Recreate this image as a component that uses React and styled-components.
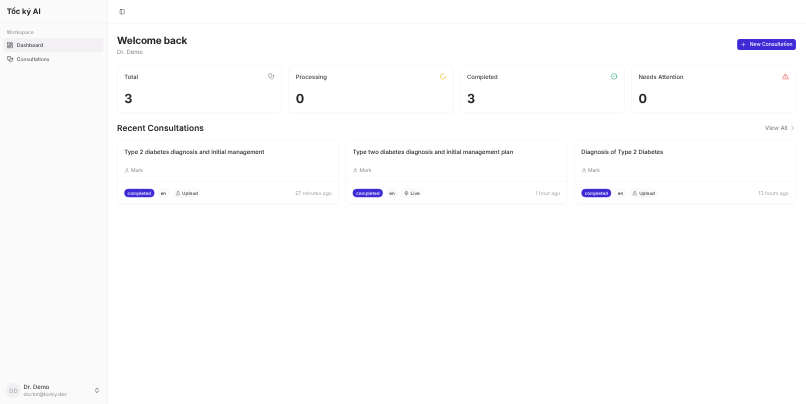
import React from "react";
import styled, { createGlobalStyle } from "styled-components";
import { PanelLeft, LayoutDashboard, Stethoscope, ChevronsUpDown, Plus, LoaderCircle, CircleCheck, TriangleAlert, ChevronRight, User, Upload, Mic } from "lucide-react";

const Global = createGlobalStyle`
  html, body { margin: 0; padding: 0; background: #fff; overflow: hidden; }
  * { box-sizing: border-box; }
  body { font-family: Inter, "Liberation Sans", sans-serif; color: #18181b; text-rendering: geometricPrecision; }
`;

const Frame = styled.div`
  width: 806px;
  height: 404px;
  overflow: hidden;
`;
const Shell = styled.div`
  transform: scale(0.4198);
  transform-origin: 0 0;
  filter: blur(0.5px);
  width: 1920px;
  height: 962px;
  display: flex;
  background: #fff;
`;
const Sidebar = styled.aside`
  width: 256px;
  flex: none;
  display: flex;
  flex-direction: column;
  background: #fafafa;
  border-right: 1px solid #ececee;
`;
const Brand = styled.div`
  height: 56px;
  flex: none;
  display: flex;
  align-items: center;
  padding: 0 16px;
  font-size: 18px;
  font-weight: 700;
  color: #27272a;
  border-bottom: 1px solid #f0f0f2;
`;
const Nav = styled.nav`
  flex: 1;
  padding: 4px 8px 8px;
  display: flex;
  flex-direction: column;
`;
const GroupLabel = styled.div`
  height: 31px;
  display: flex;
  align-items: center;
  padding: 0 8px;
  font-size: 12px;
  font-weight: 400;
  color: #8a8a93;
`;
const NavItem = styled.div`
  height: 33px;
  padding: 0 8px;
  display: flex;
  align-items: center;
  gap: 8px;
  font-size: 12px;
  font-weight: ${(p) => (p.$active ? 500 : 400)};
  color: #3f3f46;
  border-radius: 8px;
  background: ${(p) => (p.$active ? "#f2f0f3" : "transparent")};
`;
const UserRow = styled.div`
  height: 64px;
  flex: none;
  margin: 0 8px;
  padding: 0 8px 0 8px;
  display: flex;
  align-items: center;
  gap: 6px;
`;
const Avatar = styled.div`
  width: 36px;
  height: 36px;
  margin-left: -2px;
  border-radius: 50%;
  background: #f2f0f3;
  color: #a1a1aa;
  font-size: 14px;
  display: flex;
  align-items: center;
  justify-content: center;
  flex: none;
`;
const UserText = styled.div`
  flex: 1;
  padding-top: 2px;
  line-height: 17px;
  font-size: 14px;
  font-weight: 500;
  color: #3f3f46;
  span { display: block; font-size: 12px; font-weight: 400; color: #8a8a93; }
`;
const Main = styled.main`
  flex: 1;
  min-width: 0;
  display: flex;
  flex-direction: column;
`;
const TopBar = styled.header`
  height: 56px;
  flex: none;
  display: flex;
  align-items: center;
  padding: 0 28px;
  color: #52525b;
  border-bottom: 1px solid #f0f0f2;
`;
const Content = styled.div`
  padding: 24px 24px 24px 23px;
  display: flex;
  flex-direction: column;
`;
const Heading = styled.div`
  display: flex;
  align-items: center;
  justify-content: space-between;
  height: 54px;
  margin-bottom: 21px;
`;
const Title = styled.h1`
  margin: 0;
  font-size: 24px;
  line-height: 32px;
  font-weight: 700;
  letter-spacing: -0.5px;
  color: #27272a;
`;
const Sub = styled.div`
  padding-top: 2px;
  font-size: 14px;
  line-height: 20px;
  color: #8a8a93;
`;
const PrimaryButton = styled.button`
  height: 26px;
  width: 140px;
  margin-bottom: 3px;
  border: 0;
  border-radius: 6px;
  background: #3f2bd6;
  color: #f1efff;
  font: 500 12px Inter, sans-serif;
  display: flex;
  align-items: center;
  justify-content: center;
  gap: 8px;
`;
const Stats = styled.section`
  display: grid;
  grid-template-columns: repeat(4, 1fr);
  gap: 16px;
`;
const Card = styled.div`
  background: #fff;
  border: 1px solid #f2f2f4;
  border-radius: 12px;
  box-shadow: 0 1px 2px rgba(0, 0, 0, 0.02);
`;
const StatCard = styled(Card)`
  height: 114px;
  padding: 16px;
`;
const StatHead = styled.div`
  display: flex;
  align-items: center;
  justify-content: space-between;
  height: 20px;
  font-size: 14px;
  font-weight: 500;
  color: #3f3f46;
  svg { color: ${(p) => p.$tone}; }
`;
const StatValue = styled.div`
  margin-top: 25px;
  font-size: 30px;
  line-height: 36px;
  font-weight: 700;
  color: #27272a;
`;
const SectionHead = styled.div`
  display: flex;
  align-items: center;
  justify-content: space-between;
  height: 28px;
  margin: 22px 0 14px;
`;
const SectionTitle = styled.h2`
  margin: 0;
  font-size: 20px;
  font-weight: 600;
  color: #27272a;
`;
const ViewAll = styled.div`
  display: flex;
  align-items: center;
  gap: 4px;
  font-size: 14px;
  font-weight: 500;
  color: #8a8a93;
`;
const Consultations = styled.section`
  display: grid;
  grid-template-columns: repeat(3, 1fr);
  gap: 16px;
`;
const ConsultCard = styled(Card)`
  height: 152px;
  display: flex;
  flex-direction: column;
`;
const ConsultBody = styled.div`
  flex: 1;
  padding: 17px 16px;
`;
const ConsultTitle = styled.div`
  font-size: 14px;
  line-height: 24px;
  font-weight: 500;
  color: #27272a;
`;
const Patient = styled.div`
  margin-top: 22px;
  display: flex;
  align-items: center;
  gap: 4px;
  font-size: 12px;
  line-height: 18px;
  color: #8a8a93;
`;
const ConsultFoot = styled.div`
  height: 54px;
  flex: none;
  padding: 0 16px;
  display: flex;
  align-items: center;
  gap: 8px;
  border-top: 1px solid #f2f2f4;
`;
const Badge = styled.span`
  height: 20px;
  padding: 0 ${(p) => (p.$solid ? 7 : 6)}px;
  display: inline-flex;
  align-items: center;
  gap: 4px;
  border-radius: 999px;
  font-size: 11px;
  font-weight: 500;
  color: ${(p) => (p.$solid ? "#e8e5ff" : "#3f3f46")};
  background: ${(p) => (p.$solid ? "#3f2bd6" : "#fcfcfc")};
  border: 1px solid ${(p) => (p.$solid ? "#3f2bd6" : "#ececee")};
`;
const Time = styled.span`
  margin-left: auto;
  font-size: 12px;
  color: #a1a1aa;
`;

const stats = [
  { label: "Total", value: 3, Icon: Stethoscope, tone: "#8a8a93" },
  { label: "Processing", value: 0, Icon: LoaderCircle, tone: "#eab308" },
  { label: "Completed", value: 3, Icon: CircleCheck, tone: "#22a06b" },
  { label: "Needs Attention", value: 0, Icon: TriangleAlert, tone: "#ef4444" },
];
const consultations = [
  { title: "Type 2 diabetes diagnosis and initial management", source: "Upload", time: "27 minutes ago", Icon: Upload },
  { title: "Type two diabetes diagnosis and initial management plan", source: "Live", time: "1 hour ago", Icon: Mic },
  { title: "Diagnosis of Type 2 Diabetes", source: "Upload", time: "13 hours ago", Icon: Upload },
];

export default function App() {
  return (
    <Frame>
      <Global />
      <Shell>
        <Sidebar>
          <Brand>Tốc ký AI</Brand>
          <Nav>
            <GroupLabel>Workspace</GroupLabel>
            <NavItem $active><LayoutDashboard size={16} />Dashboard</NavItem>
            <NavItem><Stethoscope size={16} />Consultations</NavItem>
          </Nav>
          <UserRow>
            <Avatar>DD</Avatar>
            <UserText>Dr. Demo<span>doctor@tocky.dev</span></UserText>
            <ChevronsUpDown size={16} />
          </UserRow>
        </Sidebar>
        <Main>
          <TopBar><PanelLeft size={14} /></TopBar>
          <Content>
            <Heading>
              <div>
                <Title>Welcome back</Title>
                <Sub>Dr. Demo</Sub>
              </div>
              <PrimaryButton><Plus size={14} />New Consultation</PrimaryButton>
            </Heading>
            <Stats>
              {stats.map(({ label, value, Icon, tone }) => (
                <StatCard key={label}>
                  <StatHead $tone={tone}>{label}<Icon size={16} /></StatHead>
                  <StatValue>{value}</StatValue>
                </StatCard>
              ))}
            </Stats>
            <SectionHead>
              <SectionTitle>Recent Consultations</SectionTitle>
              <ViewAll>View All<ChevronRight size={16} /></ViewAll>
            </SectionHead>
            <Consultations>
              {consultations.map(({ title, source, time, Icon }) => (
                <ConsultCard key={title}>
                  <ConsultBody>
                    <ConsultTitle>{title}</ConsultTitle>
                    <Patient><User size={12} />Mark</Patient>
                  </ConsultBody>
                  <ConsultFoot>
                    <Badge $solid>completed</Badge>
                    <Badge>en</Badge>
                    <Badge><Icon size={12} />{source}</Badge>
                    <Time>{time}</Time>
                  </ConsultFoot>
                </ConsultCard>
              ))}
            </Consultations>
          </Content>
        </Main>
      </Shell>
    </Frame>
  );
}
